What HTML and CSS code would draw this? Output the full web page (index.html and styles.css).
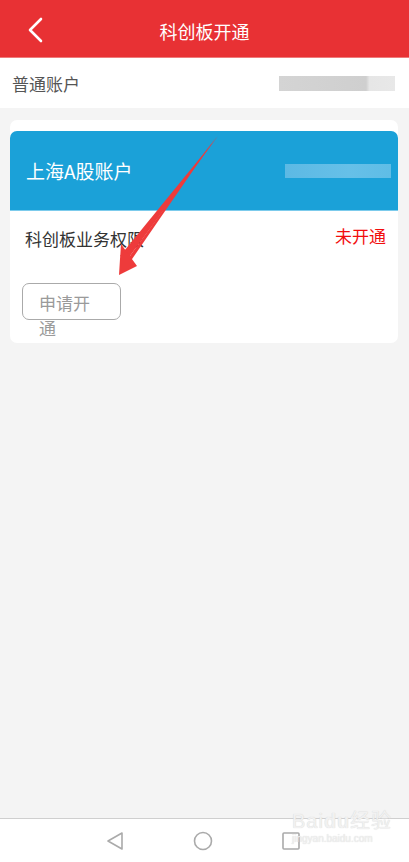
FILE: index.html
```html
<!DOCTYPE html>
<html lang="zh-CN">
<head>
  <meta charset="UTF-8">
  <meta name="viewport" content="width=device-width, initial-scale=1.0">
  <title>科创板开通</title>
  <link rel="stylesheet" href="styles.css">
</head>
<body>
  <div class="page">
    <header class="topbar">
      <svg class="back" width="16" height="26" viewBox="0 0 16 26">
        <path d="M14 2 L3 13 L14 24" fill="none" stroke="#fff" stroke-width="2.6" stroke-linecap="round" stroke-linejoin="round"/>
      </svg>
      <h1>科创板开通</h1>
    </header>

    <div class="account-row">
      <span>普通账户</span>
      <span class="blur gray"></span>
    </div>

    <main class="content">
      <div class="card">
        <div class="card-head">
          <span>上海A股账户</span>
          <span class="blur blue"></span>
        </div>
        <div class="card-body">
          <div class="perm-row">
            <span class="perm-name">科创板业务权限</span>
            <span class="perm-state">未开通</span>
          </div>
          <button class="apply">申请开通</button>
        </div>
      </div>
    </main>

    <nav class="navbar">
      <svg width="18" height="20" viewBox="0 0 18 20">
        <path d="M16 2 L2 10 L16 18 Z" fill="none" stroke="#aaa" stroke-width="1.6" stroke-linejoin="round"/>
      </svg>
      <svg width="20" height="20" viewBox="0 0 20 20">
        <circle cx="10" cy="10" r="8.5" fill="none" stroke="#aaa" stroke-width="1.6"/>
      </svg>
      <svg width="18" height="18" viewBox="0 0 18 18">
        <rect x="1" y="1" width="16" height="16" rx="1" fill="none" stroke="#aaa" stroke-width="1.6"/>
      </svg>
      <div class="watermark">
        <span class="wm-big">Bai<b>du</b>经验</span>
        <span class="wm-small">jingyan.baidu.com</span>
      </div>
    </nav>

    <!-- flèche d'annotation -->
    <svg class="arrow" width="409" height="862" viewBox="0 0 409 862">
      <path d="M218 136 L127 260 L120 256 Z" fill="#ee3b3b"/>
      <path d="M216 137 L130 262 L127 260 Z" fill="#ee3b3b"/>
      <path d="M119 275 L121 244 L137 266 Z" fill="#ee3b3b"/>
    </svg>
  </div>
</body>
</html>
```

FILE: styles.css
```css
* {
  box-sizing: border-box;
}
body {
  margin: 0;
  font-family: "Noto Sans CJK SC", "Noto Sans", sans-serif;
  background-color: #f4f4f4;
}
.page {
  position: relative;
  height: 862px;
  display: flex;
  flex-direction: column;
}
.topbar {
  height: 58px;
  background-color: #e83134;
  display: flex;
  align-items: center;
  justify-content: center;
  position: relative;
  border-bottom: 1px solid #ee7b7b;
}
.topbar h1 {
  margin: 0;
  color: #fff;
  font-size: 18px;
  font-weight: normal;
  margin-top: 4px;
}
.back {
  position: absolute;
  left: 27px;
  top: 17px;
}
.account-row {
  height: 50px;
  background: #fff;
  display: flex;
  align-items: center;
  justify-content: space-between;
  padding: 0 14px 0 12px;
  font-size: 17px;
  color: #555;
}
.blur {
  display: block;
  height: 15px;
}
.blur.gray {
  width: 116px;
  background: linear-gradient(90deg, #d4d4d4 0%, #cfcfcf 75%, #e6e6e6 78%, #e8e8e8 100%);
}
.blur.blue {
  width: 106px;
  height: 14px;
  background: linear-gradient(90deg, #5cb9e4 0%, #66c0e8 60%, #5fbde6 100%);
}
.content {
  flex: 1;
  padding: 12px 11px 0 10px;
}
.card {
  background: #fff;
  border-radius: 7px;
  padding-top: 11px;
  height: 223px;
}
.card-head {
  height: 80px;
  background-color: #1ba1d8;
  border-radius: 7px 7px 0 0;
  display: flex;
  align-items: center;
  justify-content: space-between;
  padding: 0 7px 0 16px;
  color: #fff;
  font-size: 19px;
  border-bottom: 1px solid #7ccbec;
}
.card-body {
  padding: 0 12px 0 12px;
}
.perm-row {
  display: flex;
  justify-content: space-between;
  align-items: flex-start;
  padding: 12px 0 0 3px;
  height: 72px;
}
.perm-name {
  font-size: 17px;
  color: #333;
  margin-top: 3px;
}
.perm-state {
  font-size: 17px;
  color: #f20d0d;
}
.apply {
  display: block;
  width: 99px;
  height: 37px;
  padding: 6px 16px 0;
  border: 1px solid #aaa;
  border-radius: 7px;
  background: #fff;
  font-family: inherit;
  font-size: 17px;
  line-height: 25px;
  color: #9a9a9a;
  text-align: left;
}
.navbar {
  height: 44px;
  background: #fff;
  border-top: 1px solid #cfcfcf;
  display: flex;
  align-items: center;
  gap: 69px;
  padding-left: 106px;
  position: relative;
}
.watermark {
  position: absolute;
  left: 292px;
  top: -8px;
  display: flex;
  flex-direction: column;
  color: #f1f1f1;
  font-family: "Liberation Sans", sans-serif;
  line-height: 1;
  text-shadow: 0 0 1px #cfcfcf;
}
.wm-big {
  font-size: 20px;
  letter-spacing: 1px;
}
.wm-big b {
  font-weight: bold;
}
.wm-small {
  font-size: 10px;
  margin-top: 3px;
}
.arrow {
  position: absolute;
  left: 0;
  top: 0;
  pointer-events: none;
}
```
